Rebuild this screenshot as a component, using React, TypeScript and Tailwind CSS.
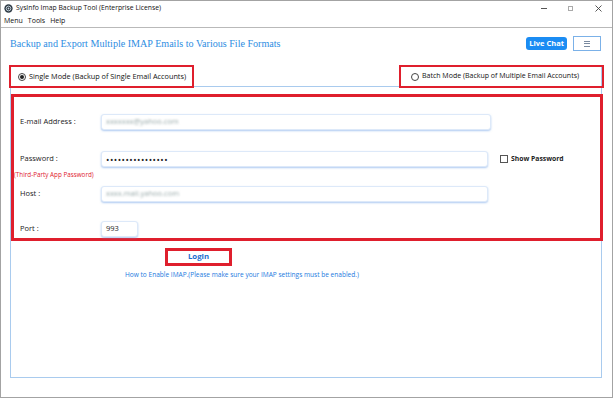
import React from "react"

function AppIcon() {
  return (
    <svg width="9" height="9" viewBox="0 0 10 10">
      <circle cx="5" cy="5" r="4.6" fill="#2f3b45" />
      <circle cx="5" cy="5" r="2.6" fill="none" stroke="#c9d6e0" strokeWidth="1" />
      <circle cx="5" cy="5" r="1" fill="#c9d6e0" />
    </svg>
  )
}

function TitleBar() {
  return (
    <div className="flex items-center h-[14px] pl-[3px]">
      <AppIcon />
      <span className="ml-[3px] text-[6.8px] text-[#111]">SysInfo Imap Backup Tool (Enterprise License)</span>
      <div className="ml-auto flex items-center h-full">
        <span className="w-[6px] h-px bg-[#555] mr-[21px]"></span>
        <span className="w-[5px] h-[5px] border border-[#aaa] mr-[22px]"></span>
        <svg width="7" height="7" viewBox="0 0 7 7" className="mr-[10px]">
          <path d="M0.5 0.5 L6.5 6.5 M6.5 0.5 L0.5 6.5" stroke="#444" strokeWidth="0.9" />
        </svg>
      </div>
    </div>
  )
}

function MenuBar() {
  return (
    <div className="flex items-center gap-[5px] h-[13px] pl-[3px] text-[7px] text-[#111] border-b-[1.5px] border-[#b9b9b9]">
      <span>Menu</span>
      <span>Tools</span>
      <span>Help</span>
    </div>
  )
}

function Radio({ checked }: { checked?: boolean }) {
  return (
    <span className="w-[8px] h-[8px] rounded-full border border-[#444] flex items-center justify-center shrink-0">
      {checked && <span className="w-[4px] h-[4px] rounded-full bg-[#222]"></span>}
    </span>
  )
}

function Field({ width, children }: { width: string; children?: React.ReactNode }) {
  return (
    <div className={`${width} h-[16px] bg-white rounded-[3px] border border-[#dde9f9] shadow-[0_1px_2px_rgba(110,160,230,0.55)] flex items-center pl-[4px] text-[7.5px]`}>
      {children}
    </div>
  )
}

export default function App() {
  return (
    <div className="w-[613px] h-[398px] bg-white border border-[#a3a3a3] flex flex-col overflow-hidden" style={{ fontFamily: '"Open Sans", "Noto Sans", sans-serif' }}>
      <TitleBar />
      <MenuBar />

      {/* heading row */}
      <div className="flex items-center h-[29px] pl-[9px] pr-[11px] mt-[1px]">
        <span className="text-[10.1px] text-[#2d8de2]" style={{ fontFamily: '"Liberation Serif", serif' }}>
          Backup and Export Multiple IMAP Emails to Various File Formats
        </span>
        <button className="ml-auto h-[13px] px-[3px] rounded-[3px] bg-[#1b8cf3] text-white text-[7.5px] font-bold leading-none">
          Live Chat
        </button>
        <button className="ml-[6px] w-[28px] h-[15px] border border-[#7bb1e8] bg-white flex items-center justify-center">
          <span className="flex flex-col gap-[1.5px]">
            <span className="w-[6px] h-px bg-[#7a8aa0]"></span>
            <span className="w-[6px] h-px bg-[#7a8aa0]"></span>
            <span className="w-[6px] h-px bg-[#7a8aa0]"></span>
          </span>
        </button>
      </div>

      {/* main panel */}
      <div className="ml-[9px] w-[592px] h-[313px] mt-[7px] border-l border-r border-b border-[#a9cbee] flex flex-col">
        <div className="flex justify-between items-start h-[22px] -mx-[2px] border-b border-[#a9cbee]">
          <div className="w-[185px] h-[23px] border-2 border-[#df1f2d] flex items-center gap-[3px] pl-[7px] text-[7.3px] text-[#111]">
            <Radio checked />
            <span>Single Mode (Backup of Single Email Accounts)</span>
          </div>
          <div className="w-[205px] h-[23px] border-2 border-[#df1f2d] flex items-center gap-[3px] pl-[10px] text-[7px] text-[#111] -mr-px">
            <Radio />
            <span>Batch Mode (Backup of Multiple Email Accounts)</span>
          </div>
        </div>

        <div className="mt-[7px] -mr-[2px] h-[147px] border-[3px] border-[#df1f2d] flex flex-col text-[7.5px] text-[#222]">
          <div className="flex items-center mt-[17px] h-[16px]">
            <span className="w-[87px] pl-[6px]">E-mail Address :</span>
            <Field width="w-[390px]">
              <span className="text-[#9aa] blur-[1.2px]">xxxxxxx@yahoo.com</span>
            </Field>
          </div>
          <div className="flex items-center mt-[21px] h-[16px]">
            <span className="w-[87px] pl-[6px]">Password :</span>
            <Field width="w-[387px]">
              <span className="text-[#222] tracking-[0.5px] text-[9px] leading-none">••••••••••••••••</span>
            </Field>
            <span className="ml-[12px] w-[8px] h-[8px] border border-[#555] bg-white"></span>
            <span className="ml-[3px] text-[6.8px] font-bold text-[#222]">Show Password</span>
          </div>
          <div className="h-[10px] mt-[3px] flex items-center text-[6.3px] text-[#e0202e]">
            (Third-Party App Password)
          </div>
          <div className="flex items-center mt-[6px] h-[16px]">
            <span className="w-[87px] pl-[6px]">Host :</span>
            <Field width="w-[387px]">
              <span className="text-[#9aa] blur-[1.2px]">xxxx.mail.yahoo.com</span>
            </Field>
          </div>
          <div className="flex items-center mt-[19px] h-[16px]">
            <span className="w-[87px] pl-[6px]">Port :</span>
            <Field width="w-[37px]">
              <span className="text-[#222]">993</span>
            </Field>
          </div>
        </div>

        <div className="mt-[7px] ml-[154px] w-[67px] h-[18px] border-[3px] border-[#df1f2d] flex items-center justify-center text-[7.8px] font-bold text-[#1c6fcf]">
          Login
        </div>
        <div className="mt-[4px] ml-[114px] text-[6.55px] text-[#1c7ae0]">
          How to Enable IMAP.(Please make sure your IMAP settings must be enabled.)
        </div>
      </div>
    </div>
  )
}
